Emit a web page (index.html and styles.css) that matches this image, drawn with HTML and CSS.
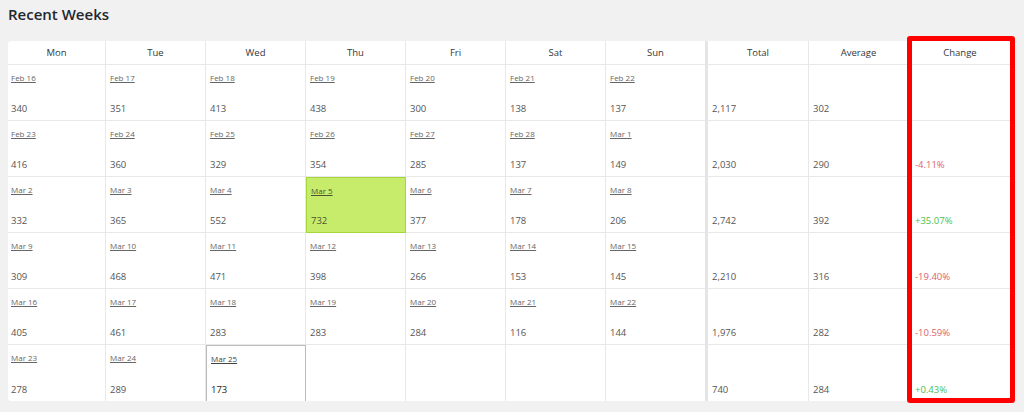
FILE: index.html
```html
<!DOCTYPE html>
<html>
<head>
<meta charset="utf-8">
<link rel="stylesheet" href="styles.css">
</head>
<body>
<div class="page">
  <h2 class="title">Recent Weeks</h2>
  <div class="board">
    <div class="grid days">
      <div class="th">Mon</div><div class="th">Tue</div><div class="th">Wed</div><div class="th">Thu</div><div class="th">Fri</div><div class="th">Sat</div><div class="th">Sun</div>

      <div class="td"><a class="date">Feb 16</a><span class="num">340</span></div>
      <div class="td"><a class="date">Feb 17</a><span class="num">351</span></div>
      <div class="td"><a class="date">Feb 18</a><span class="num">413</span></div>
      <div class="td"><a class="date">Feb 19</a><span class="num">438</span></div>
      <div class="td"><a class="date">Feb 20</a><span class="num">300</span></div>
      <div class="td"><a class="date">Feb 21</a><span class="num">138</span></div>
      <div class="td"><a class="date">Feb 22</a><span class="num">137</span></div>

      <div class="td"><a class="date">Feb 23</a><span class="num">416</span></div>
      <div class="td"><a class="date">Feb 24</a><span class="num">360</span></div>
      <div class="td"><a class="date">Feb 25</a><span class="num">329</span></div>
      <div class="td"><a class="date">Feb 26</a><span class="num">354</span></div>
      <div class="td"><a class="date">Feb 27</a><span class="num">285</span></div>
      <div class="td"><a class="date">Feb 28</a><span class="num">137</span></div>
      <div class="td"><a class="date">Mar 1</a><span class="num">149</span></div>

      <div class="td"><a class="date">Mar 2</a><span class="num">332</span></div>
      <div class="td"><a class="date">Mar 3</a><span class="num">365</span></div>
      <div class="td"><a class="date">Mar 4</a><span class="num">552</span></div>
      <div class="td best"><a class="date">Mar 5</a><span class="num">732</span></div>
      <div class="td"><a class="date">Mar 6</a><span class="num">377</span></div>
      <div class="td"><a class="date">Mar 7</a><span class="num">178</span></div>
      <div class="td"><a class="date">Mar 8</a><span class="num">206</span></div>

      <div class="td"><a class="date">Mar 9</a><span class="num">309</span></div>
      <div class="td"><a class="date">Mar 10</a><span class="num">468</span></div>
      <div class="td"><a class="date">Mar 11</a><span class="num">471</span></div>
      <div class="td"><a class="date">Mar 12</a><span class="num">398</span></div>
      <div class="td"><a class="date">Mar 13</a><span class="num">266</span></div>
      <div class="td"><a class="date">Mar 14</a><span class="num">153</span></div>
      <div class="td"><a class="date">Mar 15</a><span class="num">145</span></div>

      <div class="td"><a class="date">Mar 16</a><span class="num">405</span></div>
      <div class="td"><a class="date">Mar 17</a><span class="num">461</span></div>
      <div class="td"><a class="date">Mar 18</a><span class="num">283</span></div>
      <div class="td"><a class="date">Mar 19</a><span class="num">283</span></div>
      <div class="td"><a class="date">Mar 20</a><span class="num">284</span></div>
      <div class="td"><a class="date">Mar 21</a><span class="num">116</span></div>
      <div class="td"><a class="date">Mar 22</a><span class="num">144</span></div>

      <div class="td last"><a class="date">Mar 23</a><span class="num">278</span></div>
      <div class="td last"><a class="date">Mar 24</a><span class="num">289</span></div>
      <div class="td last today"><a class="date">Mar 25</a><span class="num">173</span></div>
      <div class="td last"></div>
      <div class="td last"></div>
      <div class="td last"></div>
      <div class="td last"></div>
    </div>
    <div class="grid stats">
      <div class="th">Total</div><div class="th">Average</div><div class="th">Change</div>

      <div class="td"><span class="num">2,117</span></div>
      <div class="td"><span class="num">302</span></div>
      <div class="td"><span class="num"></span></div>

      <div class="td"><span class="num">2,030</span></div>
      <div class="td"><span class="num">290</span></div>
      <div class="td"><span class="num down">-4.11%</span></div>

      <div class="td"><span class="num">2,742</span></div>
      <div class="td"><span class="num">392</span></div>
      <div class="td"><span class="num up">+35.07%</span></div>

      <div class="td"><span class="num">2,210</span></div>
      <div class="td"><span class="num">316</span></div>
      <div class="td"><span class="num down">-19.40%</span></div>

      <div class="td"><span class="num">1,976</span></div>
      <div class="td"><span class="num">282</span></div>
      <div class="td"><span class="num down">-10.59%</span></div>

      <div class="td last"><span class="num">740</span></div>
      <div class="td last"><span class="num">284</span></div>
      <div class="td last"><span class="num up">+0.43%</span></div>
    </div>
  </div>
  <div class="highlight-box"></div>
</div>
</body>
</html>
```
FILE: styles.css
```css
html, body {
  margin: 0;
  padding: 0;
  background: #f1f1f1;
}
body {
  font-family: "Open Sans", "Liberation Sans", sans-serif;
  color: #555;
}
.page {
  position: relative;
  padding: 0 8px;
  width: 1024px;
  height: 412px;
  box-sizing: border-box;
}
.title {
  margin: 0;
  padding-top: 4px;
  font-size: 15px;
  line-height: 20px;
  font-weight: 600;
  color: #23282d;
  margin-bottom: 17px;
}
.board {
  display: flex;
  gap: 3px;
  width: 1003px;
  background: #e5e5e5;
  border-radius: 3px;
  overflow: hidden;
}
.grid {
  display: grid;
  background: #fff;
  grid-template-rows: 24px repeat(6, 56px);
}
.days {
  grid-template-columns: 98px repeat(5, 100px) 99px;
}
.stats {
  grid-template-columns: 101px 100px 102px;
}
.th {
  box-sizing: border-box;
  border-right: 1px solid #e8e8e8;
  border-bottom: 1px solid #e8e8e8;
  text-align: center;
  font-size: 9.5px;
  line-height: 23px;
  color: #32373c;
}
.th:nth-child(7), .stats .th:nth-child(3) {
  border-right: 0;
}
.td {
  box-sizing: border-box;
  border-right: 1px solid #e8e8e8;
  border-bottom: 1px solid #e8e8e8;
  padding: 8px 4px 5px;
  display: flex;
  flex-direction: column;
  justify-content: space-between;
}
.days .td:nth-child(7n) , .stats .td:nth-child(3n) {
  border-right: 0;
}
.days .td:nth-child(7n+1) {
  padding-left: 3px;
}
.stats .td {
  justify-content: flex-end;
}
.stats .td:nth-child(3n) {
  padding-left: 6px;
}
.td.last {
  border-bottom: 0;
}
.date {
  font-size: 8px;
  line-height: 10px;
  color: #666;
  text-decoration: underline;
  align-self: flex-start;
}
.num {
  font-size: 9.5px;
  line-height: 12px;
  color: #555;
}
.best {
  background: #c7ec6c;
  border: 1px solid #a5d63b;
  padding-left: 4px;
}
.best .num, .best .date {
  color: #4a5533;
}
.today {
  border: 1px solid #bbb;
}
.today .date {
  color: #444;
}
.today .num {
  color: #222;
}
.down {
  color: #e0616b;
}
.up {
  color: #4cbf4c;
}
.highlight-box {
  position: absolute;
  left: 907px;
  top: 36px;
  width: 108px;
  height: 367px;
  box-sizing: border-box;
  border: 5px solid #ff0000;
  border-radius: 3px;
}
```
